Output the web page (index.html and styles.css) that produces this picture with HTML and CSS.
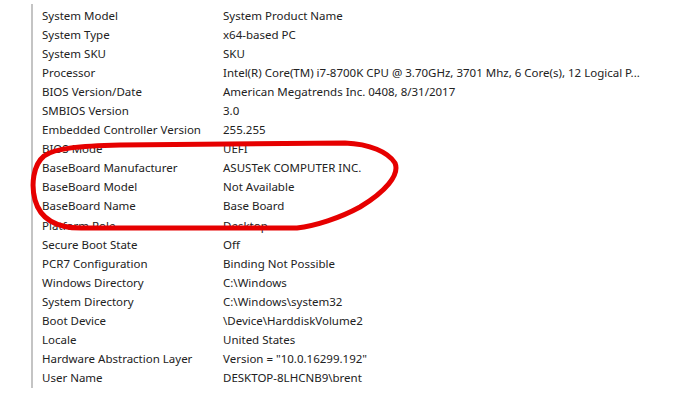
FILE: index.html
```html
<!DOCTYPE html>
<html>
<head>
<meta charset="utf-8">
<link rel="stylesheet" href="styles.css">
</head>
<body>
<div class="page">
  <div class="list">
    <div class="row"><span class="k">System Model</span><span class="v">System Product Name</span></div>
    <div class="row"><span class="k">System Type</span><span class="v">x64-based PC</span></div>
    <div class="row"><span class="k">System SKU</span><span class="v">SKU</span></div>
    <div class="row"><span class="k">Processor</span><span class="v">Intel(R) Core(TM) i7-8700K CPU @ 3.70GHz, 3701 Mhz, 6 Core(s), 12 Logical P...</span></div>
    <div class="row"><span class="k">BIOS Version/Date</span><span class="v">American Megatrends Inc. 0408, 8/31/2017</span></div>
    <div class="row"><span class="k">SMBIOS Version</span><span class="v">3.0</span></div>
    <div class="row"><span class="k">Embedded Controller Version</span><span class="v">255.255</span></div>
    <div class="row"><span class="k">BIOS Mode</span><span class="v">UEFI</span></div>
    <div class="row"><span class="k">BaseBoard Manufacturer</span><span class="v">ASUSTeK COMPUTER INC.</span></div>
    <div class="row"><span class="k">BaseBoard Model</span><span class="v">Not Available</span></div>
    <div class="row"><span class="k">BaseBoard Name</span><span class="v">Base Board</span></div>
    <div class="row"><span class="k">Platform Role</span><span class="v">Desktop</span></div>
    <div class="row"><span class="k">Secure Boot State</span><span class="v">Off</span></div>
    <div class="row"><span class="k">PCR7 Configuration</span><span class="v">Binding Not Possible</span></div>
    <div class="row"><span class="k">Windows Directory</span><span class="v">C:\Windows</span></div>
    <div class="row"><span class="k">System Directory</span><span class="v">C:\Windows\system32</span></div>
    <div class="row"><span class="k">Boot Device</span><span class="v">\Device\HarddiskVolume2</span></div>
    <div class="row"><span class="k">Locale</span><span class="v">United States</span></div>
    <div class="row"><span class="k">Hardware Abstraction Layer</span><span class="v">Version = "10.0.16299.192"</span></div>
    <div class="row"><span class="k">User Name</span><span class="v">DESKTOP-8LHCNB9\brent</span></div>
  </div>
  <svg class="mark" width="689" height="399" viewBox="0 0 689 399">
    <path d="M 44 156 C 55 148, 80 146, 120 145 L 345 143 C 370 144, 388 152, 395 163 C 400 175, 385 192, 360 207 C 340 218, 315 226, 297 228 L 85 228 C 55 229, 40 218, 35 200 C 31 185, 33 165, 44 156 Z" fill="none" stroke="#e60000" stroke-width="5" stroke-linejoin="round"/>
  </svg>
</div>
</body>
</html>
```
FILE: styles.css
```css
html, body {
  margin: 0;
  padding: 0;
  background: #ffffff;
}
.page {
  position: relative;
  width: 689px;
  height: 399px;
  overflow: hidden;
}
.list {
  margin-left: 31px;
  margin-top: 4px;
  padding-top: 2px;
  padding-left: 9px;
  border-left: 2px solid #c4c4c4;
  width: 640px;
  height: 382px;
  font-family: "Noto Sans", "Open Sans", sans-serif;
  font-size: 11.5px;
  color: #222222;
}
.row {
  display: grid;
  grid-template-columns: 181px 1fr;
  height: 19.06px;
  line-height: 19px;
  white-space: nowrap;
}
.mark {
  position: absolute;
  left: 0;
  top: 0;
  pointer-events: none;
}
```
